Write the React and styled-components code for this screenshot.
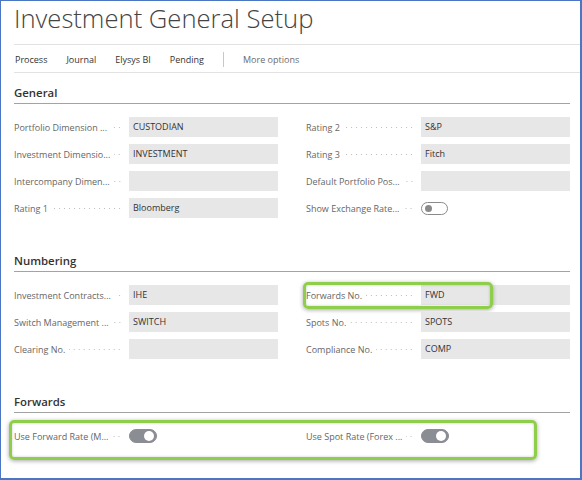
import React from "react";
import styled, { createGlobalStyle } from "styled-components";

const GlobalStyle = createGlobalStyle`
  body {
    margin: 0;
    font-family: "Open Sans", "Noto Sans", sans-serif;
    background: #fff;
  }
`;

const Frame = styled.div`
  width: 582px;
  height: 480px;
  box-sizing: border-box;
  border: 1px solid #4a76c4;
  border-right-width: 2px;
  border-bottom-width: 2px;
  overflow: hidden;
  background: #fff;
`;

const Title = styled.h1`
  margin: 0;
  padding: 0 0 0 13px;
  height: 43px;
  line-height: 35px;
  font-size: 25.6px;
  font-weight: 300;
  color: #444;
`;

const Rule = styled.div`
  margin-left: 13px;
  border-top: 1px solid #e2e2e2;
`;

const Toolbar = styled.div`
  display: flex;
  align-items: center;
  height: 27px;
  padding: 2px 0 0 14px;
  box-sizing: border-box;
  font-size: 9px;
  color: #333;
`;

const ToolItem = styled.span`
  margin-right: 19px;
  color: ${(p) => (p.$muted ? "#6b6b6b" : "#333")};
`;

const ToolSep = styled.span`
  width: 1px;
  height: 15px;
  background: #c8c8c8;
  margin-right: 19px;
`;

const Content = styled.div`
  padding: 11px 10px 0 13px;
`;

const Section = styled.section`
  margin-bottom: 34px;
`;

const Heading = styled.h2`
  margin: 0 0 13px;
  height: 19px;
  line-height: 18px;
  font-size: 11.4px;
  font-weight: 600;
  color: #333;
  border-bottom: 1px solid #a3a3a3;
`;

const Grid = styled.div`
  position: relative;
  display: grid;
  grid-template-columns: 264px 264px;
  column-gap: 28px;
  row-gap: 7px;
  grid-auto-rows: 20px;
`;

const Row = styled.div`
  position: relative;
  display: flex;
  align-items: center;
  grid-column: ${(p) => p.$col};
`;

const Label = styled.div`
  display: flex;
  align-items: center;
  width: 115px;
  flex: none;
  padding-right: 7px;
  box-sizing: border-box;
  font-size: 9px;
  color: #666;
  white-space: nowrap;
`;

const Leader = styled.span`
  flex: 1;
  min-width: 3px;
  height: 3px;
  margin-left: 4px;
  background: radial-gradient(circle, #bdbdbd 0.6px, transparent 1px) right
    center / 5px 3px repeat-x;
`;

const Field = styled.div`
  flex: 1;
  height: 20px;
  line-height: 20px;
  padding-left: 4px;
  background: #e7e7e8;
  font-size: 9px;
  color: #333;
`;

const Toggle = styled.span`
  position: relative;
  box-sizing: border-box;
  width: ${(p) => (p.$on ? 28 : 27)}px;
  height: ${(p) => (p.$on ? 14 : 13)}px;
  border-radius: 8px;
  border: 1px solid ${(p) => (p.$on ? "#8b8d95" : "#8a8a8a")};
  background: ${(p) => (p.$on ? "#8b8d95" : "#fff")};

  &::after {
    content: "";
    position: absolute;
    top: ${(p) => (p.$on ? 1 : 2)}px;
    ${(p) => (p.$on ? "right: 2px;" : "left: 3px;")}
    width: ${(p) => (p.$on ? 10 : 7)}px;
    height: ${(p) => (p.$on ? 10 : 7)}px;
    border-radius: 50%;
    background: ${(p) => (p.$on ? "#fff" : "#8a8a8a")};
  }
`;

const Highlight = styled.div`
  position: absolute;
  left: ${(p) => p.$x}px;
  top: ${(p) => p.$y}px;
  width: ${(p) => p.$w}px;
  height: ${(p) => p.$h}px;
  box-sizing: border-box;
  border: 3px solid #8fce4a;
  border-radius: 5px;
  box-shadow: 0 1px 4px rgba(0, 0, 0, 0.35), inset 0 0 3px rgba(0, 0, 0, 0.2);
  pointer-events: none;
`;

const general = [
  ["Portfolio Dimension ...", "CUSTODIAN", "Rating 2", "S&P"],
  ["Investment Dimensio...", "INVESTMENT", "Rating 3", "Fitch"],
  ["Intercompany Dimen...", "", "Default Portfolio Pos...", ""],
  ["Rating 1", "Bloomberg", "Show Exchange Rate...", null],
];

const numbering = [
  ["Investment Contracts...", "IHE", "Forwards No.", "FWD"],
  ["Switch Management ...", "SWITCH", "Spots No.", "SPOTS"],
  ["Clearing No.", "", "Compliance No.", "COMP"],
];

function Item({ col, label, value, toggle, children }) {
  return (
    <Row $col={col}>
      <Label>
        <span>{label}</span>
        <Leader />
      </Label>
      {toggle ? <Toggle $on={toggle === "on"} /> : <Field>{value}</Field>}
      {children}
    </Row>
  );
}

export default function App() {
  return (
    <>
      <GlobalStyle />
      <Frame>
        <Title>Investment General Setup</Title>
        <Rule />
        <Toolbar>
          <ToolItem>Process</ToolItem>
          <ToolItem>Journal</ToolItem>
          <ToolItem>Elysys BI</ToolItem>
          <ToolItem>Pending</ToolItem>
          <ToolSep />
          <ToolItem $muted>More options</ToolItem>
        </Toolbar>
        <Rule />
        <Content>
          <Section>
            <Heading>General</Heading>
            <Grid>
              {general.map(([l1, v1, l2, v2]) => (
                <React.Fragment key={l1}>
                  <Item col={1} label={l1} value={v1} />
                  {v2 === null ? (
                    <Item col={2} label={l2} toggle="off" />
                  ) : (
                    <Item col={2} label={l2} value={v2} />
                  )}
                </React.Fragment>
              ))}
            </Grid>
          </Section>
          <Section>
            <Heading>Numbering</Heading>
            <Grid>
              {numbering.map(([l1, v1, l2, v2]) => (
                <React.Fragment key={l1}>
                  <Item col={1} label={l1} value={v1} />
                  <Item col={2} label={l2} value={v2}>
                    {l2 === "Forwards No." && (
                      <Highlight $x={-3} $y={-3} $w={190} $h={27} />
                    )}
                  </Item>
                </React.Fragment>
              ))}
            </Grid>
          </Section>
          <Section>
            <Heading>Forwards</Heading>
            <Grid>
              <Item col={1} label="Use Forward Rate (M..." toggle="on" />
              <Item col={2} label="Use Spot Rate (Forex ..." toggle="on" />
              <Highlight $x={-5} $y={-6} $w={528} $h={40} />
            </Grid>
          </Section>
        </Content>
      </Frame>
    </>
  );
}
